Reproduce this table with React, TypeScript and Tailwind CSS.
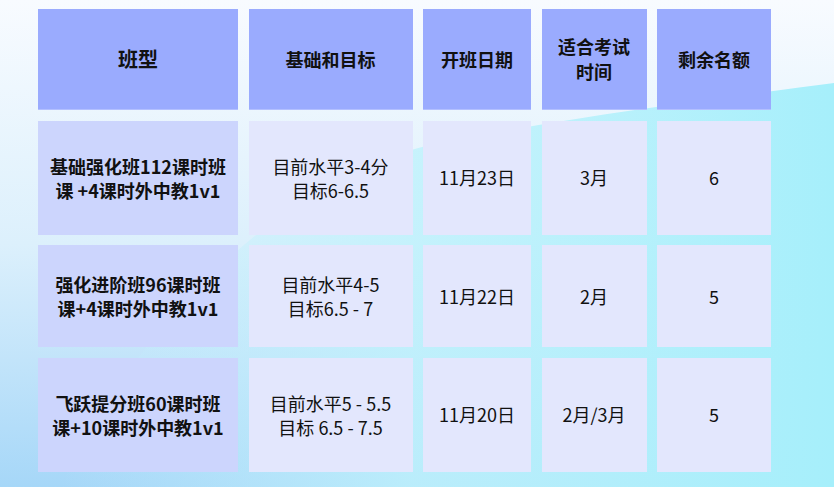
import React from "react";

const font = { fontFamily: '"Noto Sans CJK SC", "Noto Sans", sans-serif' };

type Row = { name: string[]; goal: string[]; date: string; exam: string; left: string };

const rows: Row[] = [
  { name: ["基础强化班112课时班", "课 +4课时外中教1v1"], goal: ["目前水平3-4分", "目标6-6.5"], date: "11月23日", exam: "3月", left: "6" },
  { name: ["强化进阶班96课时班", "课+4课时外中教1v1"], goal: ["目前水平4-5", "目标6.5 - 7"], date: "11月22日", exam: "2月", left: "5" },
  { name: ["飞跃提分班60课时班", "课+10课时外中教1v1"], goal: ["目前水平5 - 5.5", "目标 6.5 - 7.5"], date: "11月20日", exam: "2月/3月", left: "5" },
];

function Background() {
  return (
    <svg className="absolute inset-0 h-full w-full" viewBox="0 0 834 487" preserveAspectRatio="none">
      <defs>
        <linearGradient id="base" x1="0" y1="0" x2="0" y2="1">
          <stop offset="0" stopColor="#f8fbff" />
          <stop offset="0.5" stopColor="#dcf0fc" />
          <stop offset="1" stopColor="#a6d7f8" />
        </linearGradient>
        <linearGradient id="cyan" x1="0" y1="0" x2="1" y2="0">
          <stop offset="0" stopColor="#c4eefc" stopOpacity="0" />
          <stop offset="0.45" stopColor="#bff2fc" stopOpacity="0.8" />
          <stop offset="1" stopColor="#a6effb" />
        </linearGradient>
      </defs>
      <rect width="834" height="487" fill="url(#base)" />
      <path d="M834 83 C 720 98 560 118 430 145 C 300 175 150 300 60 487 L834 487 Z" fill="url(#cyan)" />
    </svg>
  );
}

export default function App() {
  return (
    <div className="relative h-[487px] w-[834px] overflow-hidden text-[#111]" style={font}>
      <Background />
      <div className="relative pl-[38px] pt-[9px]">
        <div className="grid grid-cols-[200px_164px_108px_105px_114px] grid-rows-[101px_114px_102px_114px] gap-[10.5px]">
          <div className="flex items-center justify-center bg-[#9aabfe] border-b border-[#b3c0ff] text-[20px] font-bold">班型</div>
          <div className="flex items-center justify-center bg-[#9aabfe] border-b border-[#b3c0ff] text-[18px] font-bold">基础和目标</div>
          <div className="flex items-center justify-center bg-[#9aabfe] border-b border-[#b3c0ff] text-[18px] font-bold">开班日期</div>
          <div className="flex flex-col items-center justify-center bg-[#9aabfe] border-b border-[#b3c0ff] text-[18px] font-bold leading-[25px]">
            <span>适合考试</span>
            <span>时间</span>
          </div>
          <div className="flex items-center justify-center bg-[#9aabfe] border-b border-[#b3c0ff] text-[18px] font-bold">剩余名额</div>
          {rows.map((r, i) => (
            <React.Fragment key={i}>
              <div className="flex flex-col items-center justify-center bg-[#ccd5fd] text-[18px] font-bold leading-[24px]">
                <span className="whitespace-pre">{r.name[0]}</span>
                <span className="whitespace-pre">{r.name[1]}</span>
              </div>
              <div className="flex flex-col items-center justify-center bg-[#e3e7fd] text-[18px] leading-[24px]">
                <span className="whitespace-pre">{r.goal[0]}</span>
                <span className="whitespace-pre">{r.goal[1]}</span>
              </div>
              <div className="flex items-center justify-center bg-[#e3e7fd] text-[18px]">{r.date}</div>
              <div className="flex items-center justify-center bg-[#e3e7fd] text-[18px]">{r.exam}</div>
              <div className="flex items-center justify-center bg-[#e3e7fd] text-[18px]">{r.left}</div>
            </React.Fragment>
          ))}
        </div>
      </div>
    </div>
  );
}
